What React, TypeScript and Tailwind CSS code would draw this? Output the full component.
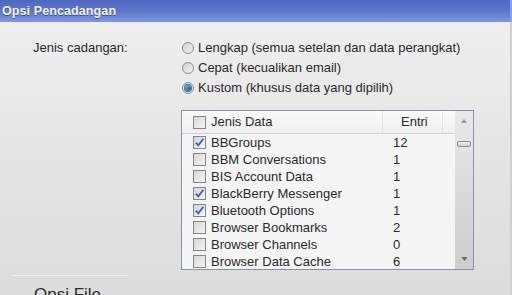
import React from "react";

const rows = [
  { name: "BBGroups", count: 12, checked: true },
  { name: "BBM Conversations", count: 1, checked: false },
  { name: "BIS Account Data", count: 1, checked: false },
  { name: "BlackBerry Messenger", count: 1, checked: true },
  { name: "Bluetooth Options", count: 1, checked: true },
  { name: "Browser Bookmarks", count: 2, checked: false },
  { name: "Browser Channels", count: 0, checked: false },
  { name: "Browser Data Cache", count: 6, checked: false },
];

const Check = ({ checked }: { checked: boolean }) => (
  <span className="relative w-[13px] h-[13px] shrink-0 border border-[#858585] bg-gradient-to-br from-[#d6d6d6] to-[#f6f6f6]">
    {checked && (
      <svg viewBox="0 0 13 13" className="absolute -left-px -top-px w-[13px] h-[13px]">
        <path d="M2.8 6.6 L5.3 9.4 L10.4 2.8" fill="none" stroke="#2f62c4" strokeWidth="1.8" />
      </svg>
    )}
  </span>
);

const Radio = ({ selected }: { selected: boolean }) => (
  <span className="w-[12px] h-[12px] rounded-full border border-[#8d8d8d] bg-gradient-to-br from-[#cfcfcf] to-[#f4f4f4] flex items-center justify-center shrink-0">
    {selected && (
      <span className="w-[6px] h-[6px] rounded-full bg-gradient-to-br from-[#6fb8ea] to-[#0f4f8a] ring-1 ring-[#3b6f96]" />
    )}
  </span>
);

export default function App() {
  return (
    <div className="w-[512px] h-[295px] overflow-hidden flex flex-col text-[13px] text-[#2a2a2a] font-['Liberation_Sans',Arial,sans-serif]">
      {/* title bar */}
      <div className="h-[22px] shrink-0 bg-gradient-to-b from-[#5067bf] via-[#5d76cc] to-[#7c96df] flex items-center pl-[2px] border-r-2 border-[#8aa0e6]">
        <span className="text-[12.5px] font-bold text-[#f2f4ff] tracking-[0.1px] [text-shadow:0_1px_0_#3c509a]">
          Opsi Pencadangan
        </span>
      </div>

      {/* body */}
      <div className="flex-1 min-h-0 bg-gradient-to-b from-[#eeeeee] to-[#dcdcdc] border-r-2 border-[#cfcfcf] pt-[16px] flex flex-col">
        <div className="flex">
          <div className="w-[182px] pl-[33px] h-5 flex items-center">Jenis cadangan:</div>
          <div className="flex flex-col">
            {[
              ["Lengkap (semua setelan dan data perangkat)", false],
              ["Cepat (kecualikan email)", false],
              ["Kustom (khusus data yang dipilih)", true],
            ].map(([label, sel]) => (
              <div key={label as string} className="h-5 flex items-center gap-[4px]">
                <Radio selected={sel as boolean} />
                <span>{label as string}</span>
              </div>
            ))}
          </div>
        </div>

        {/* list box */}
        <div className="ml-[181px] mt-[12px] w-[293px] h-[160px] shrink-0 border border-[#8892ab] bg-[#f5f5f5] flex overflow-hidden">
          <div className="flex-1 flex flex-col">
            <div className="h-[23px] shrink-0 flex border-b border-[#d2d2d2] bg-gradient-to-b from-[#fbfbfb] to-[#efefef]">
              <div className="w-[201px] flex items-center pl-[11px] gap-[5px] border-r border-[#e2e2e2]">
                <Check checked={false} />
                <span>Jenis Data</span>
              </div>
              <div className="w-[60px] flex items-center pl-[18px] border-r border-[#e2e2e2]">Entri</div>
            </div>
            {rows.map((r) => (
              <div key={r.name} className="h-[17px] shrink-0 flex items-center">
                <div className="w-[201px] flex items-center pl-[11px] gap-[5px]">
                  <Check checked={r.checked} />
                  <span>{r.name}</span>
                </div>
                <div className="pl-[10px]">{r.count}</div>
              </div>
            ))}
          </div>
          {/* scrollbar */}
          <div className="w-[18px] shrink-0 bg-gradient-to-b from-[#e9e9e9] to-[#cdcdcd] flex flex-col items-center">
            <svg viewBox="0 0 6 4" className="w-[6px] h-[4px] mt-[8px]">
              <path d="M0 4 L3 0 L6 4 Z" fill="#9a9a9a" />
            </svg>
            <span className="mt-[18px] w-[14px] h-[6px] rounded-[2px] border border-[#8f8f8f] bg-gradient-to-b from-[#f4f4f4] to-[#cfcfcf]" />
            <span className="flex-1" />
            <svg viewBox="0 0 6 4" className="w-[7px] h-[4px] mb-[8px]">
              <path d="M0 0 L6 0 L3 4 Z" fill="#6a6a6a" />
            </svg>
          </div>
        </div>

        <div className="ml-[13px] mt-[5px] w-[115px] h-px shrink-0 bg-[#f0f0f0]" />
        <div className="pl-[34px] mt-[9px] text-[17px] leading-[20px] shrink-0">Opsi File</div>
      </div>
    </div>
  );
}
